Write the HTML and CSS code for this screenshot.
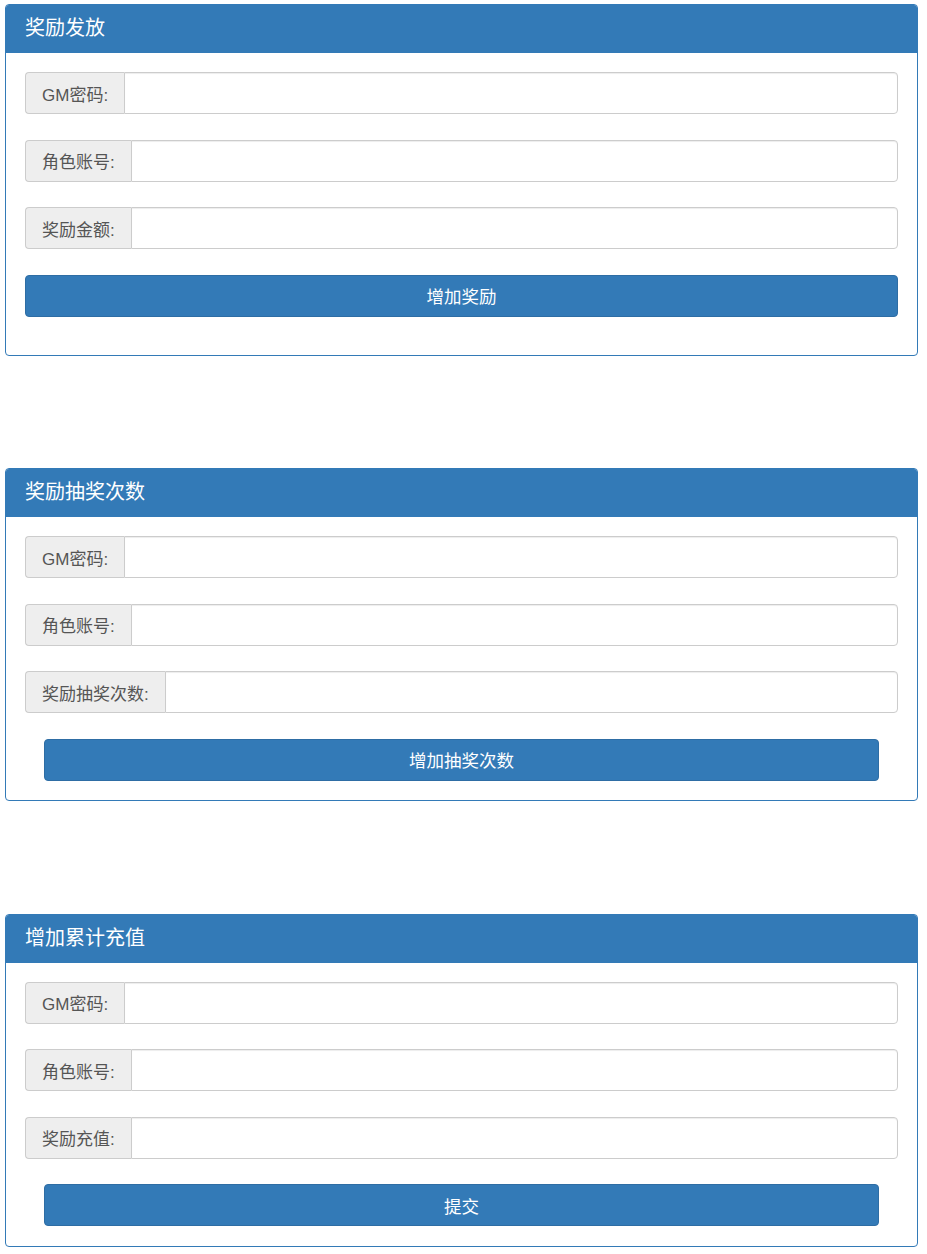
FILE: index.html
```html
<!DOCTYPE html>
<html lang="zh-CN">
<head>
<meta charset="utf-8">
<title>GM</title>
<link rel="stylesheet" href="styles.css">
</head>
<body>
<div class="page">
  <section class="panel">
    <div class="panel-heading">奖励发放</div>
    <div class="panel-body">
      <div class="input-group"><span class="addon">GM密码:</span><input class="field" type="text"></div>
      <div class="input-group"><span class="addon">角色账号:</span><input class="field" type="text"></div>
      <div class="input-group"><span class="addon">奖励金额:</span><input class="field" type="text"></div>
      <button class="btn btn-full" type="button">增加奖励</button>
    </div>
  </section>
  <section class="panel">
    <div class="panel-heading">奖励抽奖次数</div>
    <div class="panel-body body-inset">
      <div class="input-group"><span class="addon">GM密码:</span><input class="field" type="text"></div>
      <div class="input-group"><span class="addon">角色账号:</span><input class="field" type="text"></div>
      <div class="input-group"><span class="addon">奖励抽奖次数:</span><input class="field" type="text"></div>
      <button class="btn btn-inset" type="button">增加抽奖次数</button>
    </div>
  </section>
  <section class="panel">
    <div class="panel-heading">增加累计充值</div>
    <div class="panel-body body-inset">
      <div class="input-group"><span class="addon">GM密码:</span><input class="field" type="text"></div>
      <div class="input-group"><span class="addon">角色账号:</span><input class="field" type="text"></div>
      <div class="input-group"><span class="addon">奖励充值:</span><input class="field" type="text"></div>
      <button class="btn btn-inset" type="button">提交</button>
    </div>
  </section>
</div>
</body>
</html>
```

FILE: styles.css
```css
* { box-sizing: border-box; }
html, body { margin: 0; padding: 0; background: #fff; }
body {
  font-family: "Liberation Sans", "Noto Sans CJK SC", sans-serif;
  color: #333;
}
.page {
  padding: 4px 9px 0 5px;
  display: flex;
  flex-direction: column;
  gap: 112.5px;
}
.panel {
  border: 1px solid #337ab7;
  border-radius: 4px;
  overflow: hidden;
}
.panel-heading {
  background: #337ab7;
  color: #fff;
  height: 48px;
  line-height: 47px;
  padding: 0 19px;
  font-size: 20px;
}
.panel-body {
  padding: 19px 19px 19px 19px;
}
.body-inset {
  padding-bottom: 19.5px;
}
.input-group {
  display: flex;
  height: 42px;
  margin-bottom: 25.5px;
}
.addon {
  display: flex;
  align-items: center;
  padding: 0 16px;
  background: #eee;
  border: 1px solid #ccc;
  border-right: 0;
  border-radius: 4px 0 0 4px;
  color: #555;
  font-size: 17px;
  white-space: nowrap;
}
.field {
  flex: 1;
  min-width: 0;
  height: 42px;
  border: 1px solid #ccc;
  border-radius: 0 4px 4px 0;
  margin: 0;
  padding: 0 12px;
  font-size: 16px;
  box-shadow: inset 0 1px 1px rgba(0,0,0,.075);
  background: #fff;
}
.btn {
  display: block;
  height: 42px;
  background: #337ab7;
  border: 1px solid #2e6da4;
  border-radius: 4px;
  color: #fff;
  font-family: "Liberation Sans", "Noto Sans CJK SC", sans-serif;
  font-size: 17.5px;
  padding: 0;
  cursor: pointer;
}
.btn-full {
  width: 100%;
  margin: 0 0 19px;
}
.btn-inset {
  width: calc(100% - 38px);
  margin: 0 19px;
}
```
